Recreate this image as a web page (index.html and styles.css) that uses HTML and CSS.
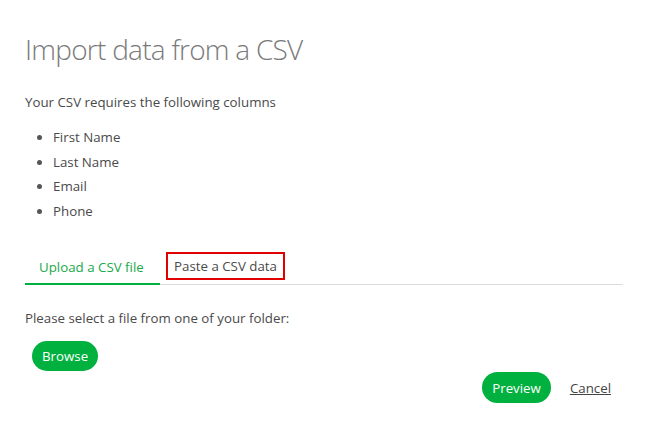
FILE: index.html
```html
<!DOCTYPE html>
<html>
<head>
<meta charset="utf-8">
<link rel="stylesheet" href="styles.css">
</head>
<body>
<div class="page">
  <h1 class="title">Import data from a CSV</h1>
  <p class="intro">Your CSV requires the following columns</p>
  <ul class="cols">
    <li>First Name</li>
    <li>Last Name</li>
    <li>Email</li>
    <li>Phone</li>
  </ul>
  <div class="tabs">
    <div class="tab active">Upload a CSV file</div>
    <div class="tab boxed">Paste a CSV data</div>
  </div>
  <p class="select">Please select a file from one of your folder:</p>
  <div class="browse-row"><button class="btn">Browse</button></div>
  <div class="actions">
    <button class="btn">Preview</button>
    <a class="cancel" href="#">Cancel</a>
  </div>
</div>
</body>
</html>
```

FILE: styles.css
```css
* { box-sizing: border-box; }
html, body { margin: 0; background: #fff; }
body {
  font-family: "Open Sans", "Noto Sans", sans-serif;
  font-size: 13.3px;
  color: #4a4a4a;
}
.page { padding: 26px 25px 0 25px; width: 648px; }
.title {
  margin: 0;
  font-weight: 300;
  font-size: 28px;
  line-height: 46px;
  color: #7a7a7a;
  letter-spacing: -0.75px;
}
.intro { margin: 20px 0 0 0; line-height: 20px; }
.cols { margin: 13px 0 0 0; padding-left: 28px; }
.cols li { line-height: 24.6px; }
.cols li::marker { color: #555; }
.tabs {
  display: flex;
  margin-top: 29px;
  border-bottom: 1px solid #dcdcdc;
  height: 33px;
  align-items: stretch;
}
.tab { padding: 0 14px; line-height: 30px; }
.tab.active {
  color: #1aa84b;
  border-bottom: 2px solid #00b140;
  margin-bottom: -1px;
  width: 135px;
}
.tab.boxed {
  border: 2px solid #e00000;
  margin-left: 6px;
  height: 28px;
  padding: 0 6px;
  line-height: 24px;
}
.select { margin: 23px 0 0 0; line-height: 20px; }
.browse-row { margin-top: 13px; padding-left: 7px; }
.btn {
  font-family: inherit;
  font-size: 13.3px;
  background: #00b140;
  color: #fff;
  border: none;
  border-radius: 15px;
  height: 30px;
  padding: 0 10px;
  cursor: pointer;
}
.actions {
  display: flex;
  justify-content: flex-end;
  align-items: center;
  gap: 19px;
  margin-top: 1px;
  padding-right: 12px;
}
.actions .btn { height: 31px; border-radius: 16px; padding: 0 10px; }
.cancel { color: #444; text-decoration: underline; }
```
